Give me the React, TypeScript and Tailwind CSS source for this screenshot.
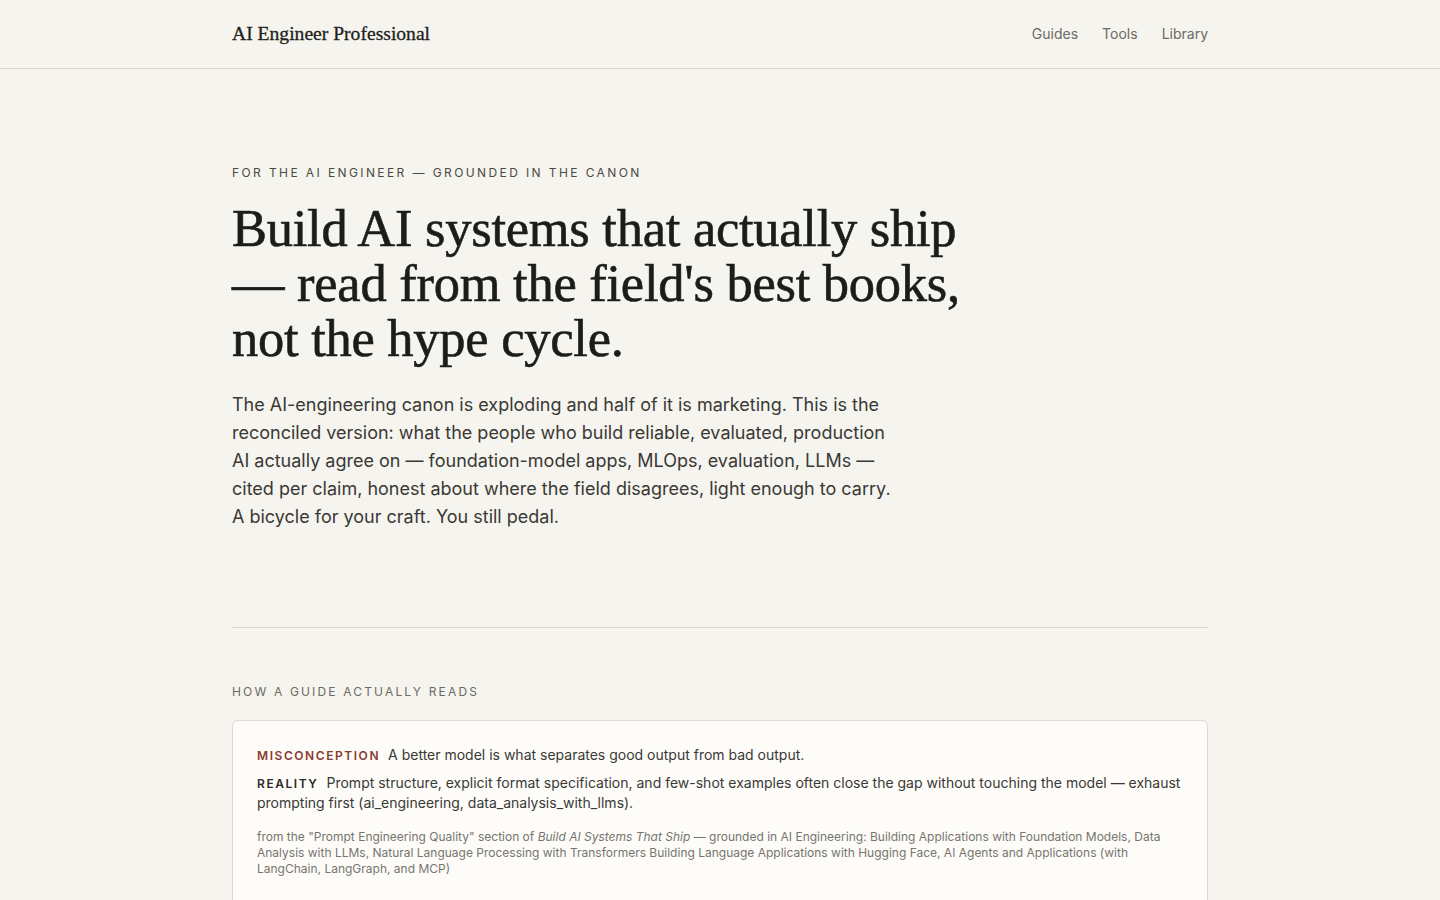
export default function App() {
  const serif = { fontFamily: '"Liberation Serif", "DejaVu Serif", serif' }
  const sans = { fontFamily: 'Inter, "Noto Sans", sans-serif' }

  return (
    <div className="min-h-screen bg-[#f6f4ee] text-[#1f1f1c]" style={sans}>
      <header className="border-b border-[#dedad1]">
        <div className="max-w-[976px] mx-auto h-[68px] flex items-center justify-between">
          <a href="#" className="text-[19.6px] text-[#1f1f1c] [-webkit-text-stroke:0.3px_#1f1f1c]" style={serif}>
            AI Engineer Professional
          </a>
          <nav className="flex items-center gap-6 text-sm text-[#6b6a64]">
            <a href="#">Guides</a>
            <a href="#">Tools</a>
            <a href="#">Library</a>
          </nav>
        </div>
      </header>

      <main className="max-w-[976px] mx-auto">
        <section className="pt-[96px] pb-[96px]">
          <p className="text-xs tracking-[0.2em] uppercase text-[#4a4944]">
            For the AI engineer — grounded in the canon
          </p>
          <h1
            className="mt-[20px] text-[52.5px] leading-[55px] tracking-[-0.005em] max-w-[740px] text-[#1c1c1a] [-webkit-text-stroke:0.6px_#1c1c1a]"
            style={serif}
          >
            Build AI systems that actually ship — read from the field's best books, not the hype cycle.
          </h1>
          <p className="mt-[25px] max-w-[665px] text-lg leading-7 text-[#3a3935]">
            The AI-engineering canon is exploding and half of it is marketing. This is the reconciled version: what
            the people who build reliable, evaluated, production AI actually agree on — foundation-model apps, MLOps,
            evaluation, LLMs — cited per claim, honest about where the field disagrees, light enough to carry. A
            bicycle for your craft. You still pedal.
          </p>
        </section>

        <section className="border-t border-[#dedad1] pt-[56px]">
          <h2 className="text-xs tracking-[0.18em] uppercase text-[#6b6a64]">How a guide actually reads</h2>
          <div className="mt-[20px] bg-[#fdfcf9] border border-[#dedad1] rounded-md px-6 pt-[24px] pb-[28px]">
            <p className="text-sm leading-5 text-[#3a3935]">
              <span className="text-xs font-semibold tracking-[0.13em] uppercase text-[#8a3b2e] mr-2">
                Misconception
              </span>
              A better model is what separates good output from bad output.
            </p>
            <p className="mt-2 text-sm leading-5 text-[#3a3935]">
              <span className="text-xs font-semibold tracking-[0.13em] uppercase text-[#2b2a27] mr-2">Reality</span>
              Prompt structure, explicit format specification, and few-shot examples often close the gap without
              touching the model — exhaust prompting first (ai_engineering, data_analysis_with_llms).
            </p>
            <p className="mt-[16px] text-xs leading-4 text-[#77756e]">
              from the "Prompt Engineering Quality" section of <em>Build AI Systems That Ship</em> — grounded in AI
              Engineering: Building Applications with Foundation Models, Data Analysis with LLMs, Natural Language
              Processing with Transformers Building Language Applications with Hugging Face, AI Agents and Applications
              (with LangChain, LangGraph, and MCP)
            </p>
          </div>
        </section>
      </main>
    </div>
  )
}
